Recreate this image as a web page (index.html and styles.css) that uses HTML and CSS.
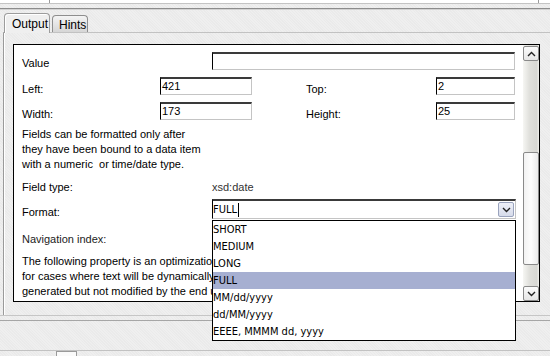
FILE: index.html
```html
<!DOCTYPE html>
<html lang="en">
<head>
    <meta charset="UTF-8">
    <title>Field Properties</title>
    <link rel="stylesheet" href="styles.css">
</head>
<body>

    <div class="topbar">
        <div class="top-cell first"></div>
        <div class="top-cell mid"></div>
        <div class="top-cell last"></div>
    </div>
    <div class="sep"></div>

    <div class="tabs">
        <div class="tab active">Output</div>
        <div class="tab">Hints</div>
    </div>

    <div class="panel">
        <div class="pane">
            <div class="pane-body">
                <div class="row row-first">
                    <div class="lbl lbl-wide lbl-value">Value</div>
                    <div class="field field-value"></div>
                </div>
                <div class="row">
                    <div class="lbl lbl-short">Left:</div>
                    <div class="field field-num">421</div>
                    <div class="lbl lbl-right">Top:</div>
                    <div class="field field-small">2</div>
                </div>
                <div class="row">
                    <div class="lbl lbl-short">Width:</div>
                    <div class="field field-num">173</div>
                    <div class="lbl lbl-right">Height:</div>
                    <div class="field field-small">25</div>
                </div>

                <p class="note note-first">
                    Fields can be formatted only after<br>
                    they have been bound to a data item<br>
                    with a numeric&nbsp; or time/date type.
                </p>

                <div class="line line-type">
                    <span class="lbl-inline">Field type:</span>
                    <span class="type-value">xsd:date</span>
                </div>

                <div class="row row-format">
                    <div class="lbl lbl-wide lbl-format">Format:</div>
                    <div class="combo">
                        <span class="combo-text">FULL<span class="caret"></span></span>
                        <span class="combo-btn">
                            <svg width="9" height="6" viewBox="0 0 9 6"><path d="M1 1 L4.5 4.5 L8 1" fill="none" stroke="#222" stroke-width="1.4"/></svg>
                        </span>
                        <ul class="dropdown">
                            <li>SHORT</li>
                            <li>MEDIUM</li>
                            <li>LONG</li>
                            <li class="selected">FULL</li>
                            <li>MM/dd/yyyy</li>
                            <li>dd/MM/yyyy</li>
                            <li>EEEE, MMMM dd, yyyy</li>
                        </ul>
                    </div>
                </div>

                <div class="line line-nav">Navigation index:</div>

                <p class="note note-second">
                    The following property is an optimization<br>
                    for cases where text will be dynamically<br>
                    generated but not modified by the end user
                </p>
            </div>

            <div class="scrollbar">
                <div class="sb-btn sb-up">
                    <svg width="9" height="6" viewBox="0 0 9 6"><path d="M1 5 L4.5 1.5 L8 5" fill="none" stroke="#222" stroke-width="1.4"/></svg>
                </div>
                <div class="sb-track">
                    <div class="sb-thumb"></div>
                </div>
                <div class="sb-btn sb-down">
                    <svg width="9" height="6" viewBox="0 0 9 6"><path d="M1 1 L4.5 4.5 L8 1" fill="none" stroke="#222" stroke-width="1.4"/></svg>
                </div>
            </div>
        </div>
    </div>

    <div class="footer">
        <div class="footer-line"></div>
        <div class="status">
            <span class="status-box"></span>
        </div>
    </div>

</body>
</html>
```

FILE: styles.css
```css
body {
    margin: 0;
    width: 550px;
    height: 356px;
    overflow: hidden;
    font-family: "Liberation Sans", Arial, sans-serif;
    font-size: 11px;
    color: #000;
    background-color: #efefef;
    background-image: repeating-linear-gradient(45deg, rgba(0, 0, 0, 0.018) 0 1px, transparent 1px 2px);
}

/* top strip */
.topbar {
    display: flex;
    height: 3px;
    background: #fff;
    border-bottom: 1px solid #c4c4c4;
}
.top-cell.first {
    width: 49px;
    border-right: 1px solid #9a9a9a;
}
.top-cell.mid {
    flex: 1;
}
.top-cell.last {
    width: 11px;
    border-left: 1px solid #9a9a9a;
}
.sep {
    margin-top: 4px;
    border-top: 1px solid #8c8c8c;
    border-bottom: 1px solid #d2d2d2;
}

/* tabs */
.tabs {
    display: flex;
    align-items: flex-end;
    gap: 2px;
    height: 22px;
    padding-left: 4px;
}
.tab {
    box-sizing: border-box;
    height: 17px;
    width: 36px;
    padding: 2px 0 0 6px;
    border: 1px solid #8e8e8e;
    border-bottom: none;
    border-radius: 4px 4px 0 0;
    background: linear-gradient(#f4f4f4, #d6d6d6);
    font-size: 12px;
    line-height: 14px;
}
.tab.active {
    position: relative;
    z-index: 1;
    width: 46px;
    height: 20px;
    margin-bottom: -1px;
    padding: 3px 0 0 7px;
    border-color: #9c9c9c;
    background: #efefef;
    box-shadow: inset 1px 1px 0 #fff;
}

/* panel */
.panel {
    margin-left: 3px;
    padding: 11px 0 13px 9px;
    border-top: 1px solid #c2c2c2;
    border-left: 1px solid #9a9a9a;
    box-shadow: inset 1px 0 0 #fff;
}
.pane {
    display: flex;
    box-sizing: border-box;
    width: 527px;
    height: 258px;
    border: 1px solid #000;
    background: #fff;
}
.pane-body {
    flex: 1;
    padding: 7px 0 0 8px;
}

/* form rows */
.row {
    display: flex;
    height: 18px;
    margin-bottom: 7px;
}
.lbl {
    box-sizing: border-box;
    line-height: 13px;
    padding-top: 6px;
}
.lbl-value {
    padding-top: 5px;
}
.lbl-wide {
    width: 190px;
}
.lbl-short {
    width: 138px;
}
.lbl-right {
    width: 130px;
    margin-left: 54px;
}
.field {
    box-sizing: border-box;
    height: 18px;
    padding-left: 1px;
    line-height: 15px;
    font-size: 11px;
    border: 1px solid #c4c4c4;
    border-top: 2px solid #3a3a3a;
    border-left: 1px solid #000;
    background: #fff;
}
.field-value {
    width: 303px;
}
.field-num {
    width: 92px;
}
.field-small {
    width: 79px;
}

.note {
    margin: 0;
    line-height: 15px;
}
.note-first {
    margin-top: 0;
}
.line {
    line-height: 15px;
}
.line-type {
    display: flex;
    margin-top: 8px;
}
.lbl-inline {
    width: 190px;
}
.type-value {
    color: #333;
}

/* format combo */
.row-format {
    margin-top: 4px;
    height: 20px;
    margin-bottom: 0;
}
.lbl-format {
    padding-top: 7px;
}
.combo {
    position: relative;
    box-sizing: border-box;
    width: 304px;
    height: 20px;
    border: 1px solid #c4c4c4;
    border-top: 2px solid #3a3a3a;
    border-left: 1px solid #000;
    background: #fff;
    display: flex;
    align-items: center;
    justify-content: space-between;
}
.combo-text {
    display: flex;
    align-items: center;
    font-family: "DejaVu Sans Condensed", "DejaVu Sans", sans-serif;
    font-size: 11px;
    padding-left: 0;
}
.caret {
    width: 1px;
    height: 14px;
    margin-left: 1px;
    background: #000;
}
.combo-btn {
    box-sizing: border-box;
    width: 16px;
    height: 15px;
    margin-right: 1px;
    border: 1px solid #9aa3bd;
    border-radius: 2px;
    background: linear-gradient(#eef0f8, #d6dbea);
    display: flex;
    align-items: center;
    justify-content: center;
}
.dropdown {
    position: absolute;
    z-index: 5;
    top: 19px;
    left: -1px;
    width: 304px;
    box-sizing: border-box;
    margin: 0;
    padding: 0;
    list-style: none;
    border: 1px solid #000;
    background: #fff;
}
.dropdown li {
    height: 17px;
    line-height: 17px;
    padding-left: 0;
    font-family: "DejaVu Sans Condensed", "DejaVu Sans", sans-serif;
    font-size: 11px;
}
.dropdown li.selected {
    background: #a6afd1;
}

.line-nav {
    margin-top: 13px;
    color: #222;
}
.note-second {
    margin-top: 7px;
}

/* scrollbar */
.scrollbar {
    display: flex;
    flex-direction: column;
    width: 16px;
    padding-top: 1px;
    background: linear-gradient(to right, #f6f6f3, #e0e0dc 40%, #d8d8d4 85%, #eeeeea);
}
.sb-btn {
    box-sizing: border-box;
    height: 15px;
    border: 1px solid #8a8a8a;
    border-radius: 2px;
    background: linear-gradient(#fbfbfb, #e6e6e6);
    display: flex;
    align-items: center;
    justify-content: center;
}
.sb-track {
    flex: 1;
    padding-top: 91px;
}
.sb-thumb {
    box-sizing: border-box;
    height: 113px;
    border: 1px solid #8a8a8a;
    border-radius: 2px;
    background: linear-gradient(to right, #f2f2f2, #fdfdfd 50%, #eaeaea);
}

/* bottom area */
.footer {
    border-top: 1px solid #c6c6c6;
}
.footer-line {
    margin-top: 4px;
    border-top: 1px solid #a6a6a6;
}
.status {
    margin-top: 29px;
    border-top: 1px solid #c2c2c2;
    height: 8px;
}
.status-box {
    display: block;
    width: 21px;
    height: 8px;
    margin-left: 56px;
    box-sizing: border-box;
    border: 1px solid #9a9a9a;
    background: #fafafa;
}
```
